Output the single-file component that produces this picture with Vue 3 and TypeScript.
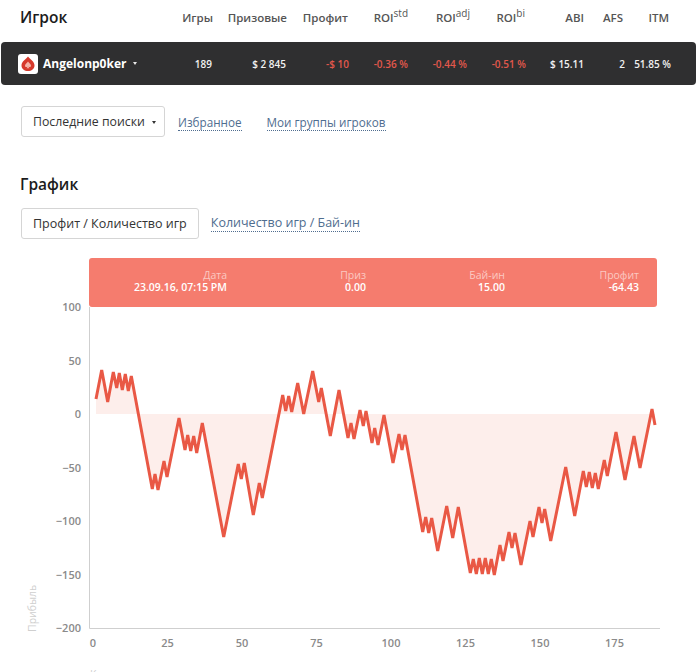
<template>
  <div class="page">
    <section class="summary">
      <div class="head-row">
        <h2 class="title">Игрок</h2>
        <span v-for="c in columns" :key="c.label + c.sup" class="head-cell">
          {{ c.label }}<sup v-if="c.sup">{{ c.sup }}</sup>
        </span>
      </div>
      <div class="player-bar">
        <div class="player">
          <svg class="logo" width="20" height="20" viewBox="0 0 20 20">
            <rect width="20" height="20" rx="3" fill="#fff" />
            <path d="M10 2.5C12 5 16.5 7.5 16.5 11.5C16.5 15 13.5 17 10 17C6.5 17 3.5 15 3.5 11.5C3.5 7.5 8 5 10 2.5Z" fill="#d6392c" />
            <path d="M10 7.5C10.8 9 13 10 13 11.7C13 13 11.4 13.3 10.5 12.4C10.6 13.2 11 13.8 11.6 14.2H8.4C9 13.8 9.4 13.2 9.5 12.4C8.6 13.3 7 13 7 11.7C7 10 9.2 9 10 7.5Z" fill="#f4b4a8" />
          </svg>
          <span class="player-name">Angelonp0ker</span>
          <i class="caret caret-light" />
        </div>
        <span v-for="c in columns" :key="c.label + c.sup" class="value" :class="{ negative: c.negative }">{{ c.value }}</span>
      </div>
    </section>

    <nav class="filters">
      <button class="btn btn-menu">Последние поиски <i class="caret" /></button>
      <a class="dashed-link small">Избранное</a>
      <a class="dashed-link small">Мои группы игроков</a>
    </nav>

    <section class="graph">
      <h2 class="title">График</h2>
      <div class="graph-tabs">
        <button class="btn">Профит / Количество игр</button>
        <a class="dashed-link">Количество игр / Бай-ин</a>
      </div>
      <div class="chart">
        <div class="chart-tip">
          <div v-for="t in tipCells" :key="t.label" class="tip-cell">
            <span class="tip-label">{{ t.label }}</span>
            <strong class="tip-value">{{ t.value }}</strong>
          </div>
        </div>
        <svg class="chart-svg" width="700" height="433" viewBox="0 239 700 433">
          <path :d="areaPath" fill="#fdeeeb" />
          <polyline :points="linePoints" fill="none" stroke="#e95845" stroke-width="3" stroke-linejoin="miter" stroke-miterlimit="3" />
          <path d="M89.5 307V628.5H660" fill="none" stroke="#cfcfcf" />
          <text v-for="t in yTicks" :key="t" class="tick" x="81" :y="yFor(t) + 4" text-anchor="end">{{ fmt(t) }}</text>
          <text v-for="t in xTicks" :key="t" class="tick" :x="93 + t * 2.98" y="647" text-anchor="middle">{{ t }}</text>
          <text class="axis-title" transform="translate(36 632) rotate(-90)">Прибыль</text>
          <text class="axis-title" x="90" y="678">Количество игр</text>
        </svg>
      </div>
    </section>
  </div>
</template>

<script setup lang="ts">
type Column = { label: string; sup?: string; value: string; negative?: boolean }

const columns: Column[] = [
  { label: 'Игры', value: '189' },
  { label: 'Призовые', value: '$ 2 845' },
  { label: 'Профит', value: '-$ 10', negative: true },
  { label: 'ROI', sup: 'std', value: '-0.36 %', negative: true },
  { label: 'ROI', sup: 'adj', value: '-0.44 %', negative: true },
  { label: 'ROI', sup: 'bi', value: '-0.51 %', negative: true },
  { label: 'ABI', value: '$ 15.11' },
  { label: 'AFS', value: '2' },
  { label: 'ITM', value: '51.85 %' },
]

const tipCells = [
  { label: 'Дата', value: '23.09.16, 07:15 PM' },
  { label: 'Приз', value: '0.00' },
  { label: 'Бай-ин', value: '15.00' },
  { label: 'Профит', value: '-64.43' },
]

const yTicks = [100, 50, 0, -50, -100, -150, -200]
const xTicks = [0, 25, 50, 75, 100, 125, 150, 175]

const yFor = (v: number) => 414 - v * 1.07
const fmt = (v: number) => (v < 0 ? '−' + Math.abs(v) : String(v))

// profit curve vertices, page pixels
const curve: [number, number][] = [
  [96, 399], [101.7, 370], [107.7, 402], [113.3, 372], [116.7, 388], [119.3, 373], [122.3, 390],
  [125.3, 374], [128.3, 391], [131.3, 376], [152.3, 489], [155, 474], [158, 490], [164, 461],
  [167, 477], [179, 418], [185, 450], [187.7, 435], [190.7, 451], [193.7, 436], [196.7, 453],
  [202.3, 423], [223.7, 537], [238.3, 464], [241.3, 479], [244.3, 463], [253.3, 515], [259.3, 483],
  [262.3, 498], [282.7, 395], [285.7, 411], [288.7, 396], [291.7, 412], [297.7, 383], [303.7, 414],
  [312.7, 371], [318.7, 402], [321.3, 388], [330.3, 436], [339, 390], [348, 438], [351, 423],
  [354, 439], [360, 410], [363.3, 426], [366, 411], [372, 443], [374.7, 428], [378, 445],
  [384, 415], [393, 463], [399, 434], [402, 450], [405, 435], [422.7, 532], [425.7, 517],
  [428.7, 533], [431.7, 518], [437.7, 551], [446.7, 506], [452.7, 538], [458.3, 507], [470.3, 573],
  [473.3, 559], [476.3, 574], [479.3, 558], [482.3, 574], [485.3, 558], [488.3, 574], [491.3, 559],
  [494.3, 575], [500, 545], [503, 561], [509, 532], [512, 548], [515, 533], [521, 565],
  [530, 521], [533, 537], [539, 507], [542, 523], [544.7, 509], [550.7, 541], [565.7, 467],
  [574.7, 516], [583.3, 471], [586.3, 487], [589.3, 472], [592.3, 488], [595.3, 473], [598.3, 489],
  [604.3, 460], [607.3, 476], [616, 432], [625, 480], [634, 436], [640, 468], [652, 409], [655, 425],
]

const linePoints = curve.map((p) => p.join(',')).join(' ')
const areaPath = 'M96 414L' + curve.map((p) => p.join(' ')).join('L') + 'L655 414Z'
</script>

<style>
html,
body {
  margin: 0;
  background: #fff;
}
</style>

<style scoped>
.page {
  width: 700px;
  height: 672px;
  overflow: hidden;
  font-family: "Open Sans", "Noto Sans", sans-serif;
  color: #222;
  background: #fff;
}
.head-row,
.player-bar {
  display: grid;
  align-items: center;
}
.head-row {
  grid-template-columns: 160px 33px 74px 61px 60px 62px 55px 59px 39px 46px;
  height: 42px;
  padding-left: 20px;
}
.title {
  margin: 0;
  font-size: 15.5px;
  line-height: 22px;
  font-weight: 600;
  color: #1c1c1c;
}
.head-row .title {
  margin-top: -8px;
}
.head-cell {
  justify-self: end;
  white-space: nowrap;
  font-size: 11.5px;
  font-weight: 600;
  color: #555;
  margin-top: -7px;
}
.head-cell sup {
  font-size: 10px;
  font-weight: 400;
  line-height: 0;
}
.player-bar {
  grid-template-columns: 140px 71px 74px 63px 59px 59px 59px 58px 41px 46px;
  width: 695px;
  height: 43px;
  margin-left: 1px;
  padding-right: 25px;
  box-sizing: border-box;
  background: #2f2f30;
  border-radius: 4px;
  color: #f2f2f2;
}
.player {
  display: flex;
  align-items: center;
  padding-left: 17px;
}
.logo {
  flex: none;
}
.player-name {
  margin-left: 5px;
  font-size: 12px;
  font-weight: 700;
  color: #fff;
}
.caret {
  display: inline-block;
  width: 0;
  height: 0;
  margin-left: 4px;
  vertical-align: middle;
  border-left: 2.5px solid transparent;
  border-right: 2.5px solid transparent;
  border-top: 3px solid #333;
}
.caret-light {
  margin-left: 7px;
  border-top-color: #e8e8e8;
}
.value {
  justify-self: end;
  white-space: nowrap;
  font-size: 10px;
  font-weight: 600;
}
.value.negative {
  color: #e2584c;
}
.filters {
  display: flex;
  align-items: center;
  gap: 13px;
  margin: 21px 0 0 21px;
}
.filters .dashed-link + .dashed-link {
  margin-left: 12px;
}
.btn {
  height: 31px;
  padding: 0 11px;
  border: 1px solid #d5d5d5;
  border-radius: 3px;
  background: #fff;
  font: 400 12.5px "Open Sans", "Noto Sans", sans-serif;
  color: #333;
  white-space: nowrap;
}
.btn-menu {
  padding-right: 8px;
  font-size: 12.3px;
}
.dashed-link {
  font-size: 12.5px;
  line-height: 16px;
  color: #4f6d8f;
  border-bottom: 1px dotted #4f6d8f;
  white-space: nowrap;
}
.dashed-link.small {
  font-size: 11.7px;
  margin-top: 2px;
}
.graph {
  margin: 36px 0 0 20px;
}
.graph-tabs {
  display: flex;
  align-items: center;
  gap: 12px;
  margin: 13px 0 0 1px;
}
.chart {
  position: relative;
  width: 700px;
  margin: 0 0 0 -20px;
}
.chart-svg {
  display: block;
}
.chart-tip {
  position: absolute;
  left: 89px;
  top: 19px;
  width: 568px;
  height: 49px;
  box-sizing: border-box;
  display: grid;
  grid-template-columns: 138px 139px 139px 134px;
  padding-top: 11px;
  background: #f57c6e;
  border-radius: 3px;
}
.tip-cell {
  display: flex;
  flex-direction: column;
  align-items: flex-end;
  line-height: 12px;
  font-size: 10.5px;
  white-space: nowrap;
}
.tip-label {
  color: #fbc9c2;
}
.tip-value {
  font-weight: 600;
  color: #fff;
}
.tick {
  font-size: 11px;
  font-weight: 600;
  fill: #8a8a8a;
}
.axis-title {
  font-size: 10.5px;
  fill: #cfcfcf;
}
</style>
